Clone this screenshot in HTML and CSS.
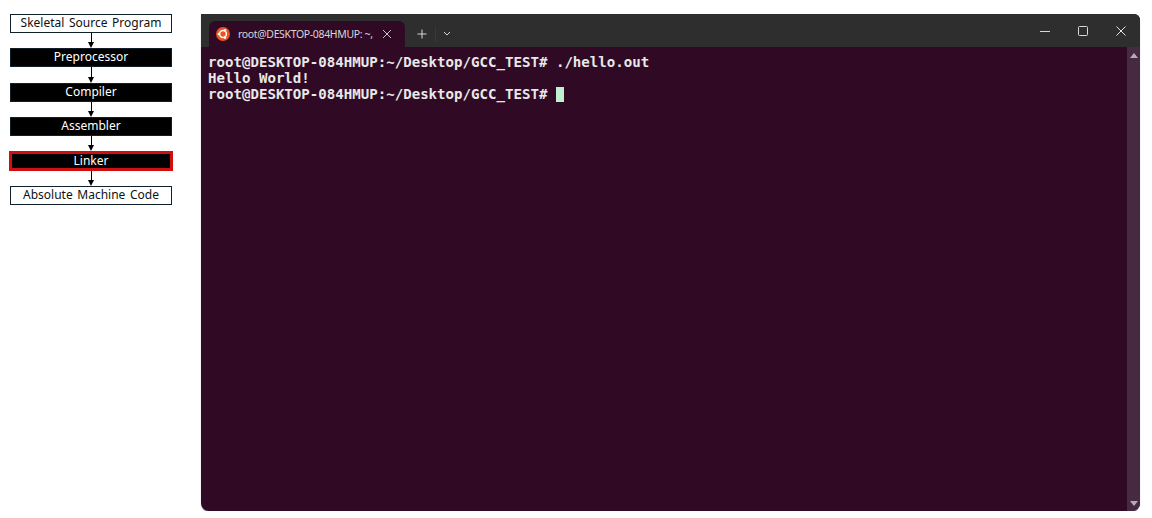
FILE: index.html
```html
<!DOCTYPE html>
<html lang="en">
<head>
    <meta charset="UTF-8">
    <title>Linker</title>
    <link rel="stylesheet" href="styles.css">
</head>
<body>
    <div class="page">
        <div class="pipeline">
            <div class="step">Skeletal Source Program</div>
            <div class="arrow"></div>
            <div class="step dark">Preprocessor</div>
            <div class="arrow long"></div>
            <div class="step dark">Compiler</div>
            <div class="arrow"></div>
            <div class="step dark">Assembler</div>
            <div class="arrow"></div>
            <div class="step dark active">Linker</div>
            <div class="arrow"></div>
            <div class="step">Absolute Machine Code</div>
        </div>

        <div class="window">
            <div class="title-bar">
                <div class="tab">
                    <svg class="ubuntu" viewBox="0 0 14 14" width="14" height="14">
                        <circle cx="7" cy="7" r="7" fill="#e95420"/>
                        <circle cx="7" cy="7" r="3.4" fill="none" stroke="#fff" stroke-width="1.5"/>
                        <circle cx="2.9" cy="7" r="1.3" fill="#fff"/>
                        <circle cx="9" cy="3.4" r="1.3" fill="#fff"/>
                        <circle cx="9" cy="10.6" r="1.3" fill="#fff"/>
                    </svg>
                    <span class="tab-title">root@DESKTOP-084HMUP: ~,</span>
                    <svg class="icon" viewBox="0 0 10 10" width="10" height="10">
                        <path d="M1 1 9 9M9 1 1 9" stroke="#c9c4c8" fill="none"/>
                    </svg>
                </div>
                <svg class="icon new-tab" viewBox="0 0 10 10" width="10" height="10">
                    <path d="M5 .5v9M.5 5h9" stroke="#d8d8d8" fill="none"/>
                </svg>
                <div class="divider"></div>
                <svg class="icon chevron" viewBox="0 0 8 6" width="8" height="6">
                    <path d="M1 1 4 4 7 1" stroke="#d8d8d8" fill="none"/>
                </svg>
                <div class="controls">
                    <svg class="icon" viewBox="0 0 10 10" width="10" height="10">
                        <path d="M0 5.5h10" stroke="#d8d8d8" fill="none"/>
                    </svg>
                    <svg class="icon" viewBox="0 0 10 10" width="10" height="10">
                        <rect x=".5" y=".5" width="9" height="9" rx="1" stroke="#d8d8d8" fill="none"/>
                    </svg>
                    <svg class="icon" viewBox="0 0 10 10" width="10" height="10">
                        <path d="M.5.5l9 9M9.5.5l-9 9" stroke="#e4e4e4" fill="none"/>
                    </svg>
                </div>
            </div>
            <div class="body">
                <pre class="terminal">root@DESKTOP-084HMUP:~/Desktop/GCC_TEST# ./hello.out
Hello World!
root@DESKTOP-084HMUP:~/Desktop/GCC_TEST# <span class="cursor"></span></pre>
                <div class="scrollbar">
                    <span class="tri up"></span>
                    <span class="tri down"></span>
                </div>
            </div>
        </div>
    </div>
</body>
</html>
```

FILE: styles.css
```css
:root {
    --terminal-bg: #300a24;
    --bar-bg: #2e2e2e;
}

body {
    margin: 0;
    background-color: #fff;
    font-family: "Noto Sans", sans-serif;
}

.page {
    display: flex;
    align-items: flex-start;
    gap: 29px;
    padding: 14px 0 0 10px;
}

/* left diagram */
.pipeline {
    width: 162px;
    display: flex;
    flex-direction: column;
}

.step {
    height: 19px;
    box-sizing: border-box;
    border: 1px solid #10202a;
    background-color: #fff;
    color: #111;
    font-size: 12px;
    line-height: 15px;
    word-spacing: 1.5px;
    text-align: center;
}

.step.dark {
    background-color: #000;
    color: #fff;
}

.step.active {
    width: 164px;
    height: 20px;
    margin-left: -1px;
    border: 3px solid #d01010;
    line-height: 13px;
}

.arrow {
    height: 15px;
    position: relative;
}

.arrow.long {
    height: 16px;
}

.arrow::before {
    content: "";
    position: absolute;
    left: 81px;
    top: 0;
    bottom: 5px;
    width: 1px;
    background-color: #000;
}

.arrow::after {
    content: "";
    position: absolute;
    left: 78px;
    bottom: 0;
    border-left: 3.5px solid transparent;
    border-right: 3.5px solid transparent;
    border-top: 6px solid #000;
}

/* terminal window */
.window {
    width: 939px;
    height: 497px;
    display: flex;
    flex-direction: column;
    border-radius: 0 6px 8px 8px;
    overflow: hidden;
    background-color: var(--terminal-bg);
    box-shadow: 0 1px 1px #999;
}

.title-bar {
    height: 33px;
    flex-shrink: 0;
    display: flex;
    align-items: center;
    padding-left: 8px;
    background-color: var(--bar-bg);
    color: #ddd;
}

.tab {
    align-self: flex-end;
    width: 196px;
    height: 26px;
    box-sizing: border-box;
    padding: 0 13px 0 7px;
    display: flex;
    align-items: center;
    border-radius: 6px 6px 0 0;
    background-color: var(--terminal-bg);
}

.tab-title {
    flex: 1;
    margin-left: 8px;
    overflow: hidden;
    white-space: nowrap;
    font-size: 10.5px;
    letter-spacing: -0.35px;
    color: #d8d4d7;
}

.icon {
    display: block;
    flex-shrink: 0;
}

.new-tab {
    margin: 7px 0 0 12px;
}

.divider {
    width: 1px;
    height: 16px;
    margin: 7px 7px 0 8px;
    background-color: #383838;
}

.chevron {
    margin-top: 7px;
}

.controls {
    margin-left: auto;
    display: flex;
    align-items: center;
    gap: 28px;
    padding-right: 14px;
}

.body {
    flex: 1;
    display: flex;
    min-height: 0;
}

.terminal {
    flex: 1;
    margin: 0;
    padding: 7px 0 0 7px;
    font-family: "DejaVu Sans Mono", monospace;
    font-size: 14.1px;
    font-weight: bold;
    line-height: 16px;
    color: #e8e8e8;
}

.cursor {
    display: inline-block;
    width: 8.5px;
    height: 15px;
    margin-top: 1px;
    vertical-align: top;
    background-color: #c0f0d0;
}

.scrollbar {
    width: 13px;
    display: flex;
    flex-direction: column;
    justify-content: space-between;
    align-items: center;
    padding: 6px 0 5px;
    background-color: #462a42;
}

.tri {
    border-left: 4px solid transparent;
    border-right: 4px solid transparent;
}

.tri.up {
    border-bottom: 5px solid #b9abb6;
}

.tri.down {
    border-top: 5px solid #b9abb6;
}
```
